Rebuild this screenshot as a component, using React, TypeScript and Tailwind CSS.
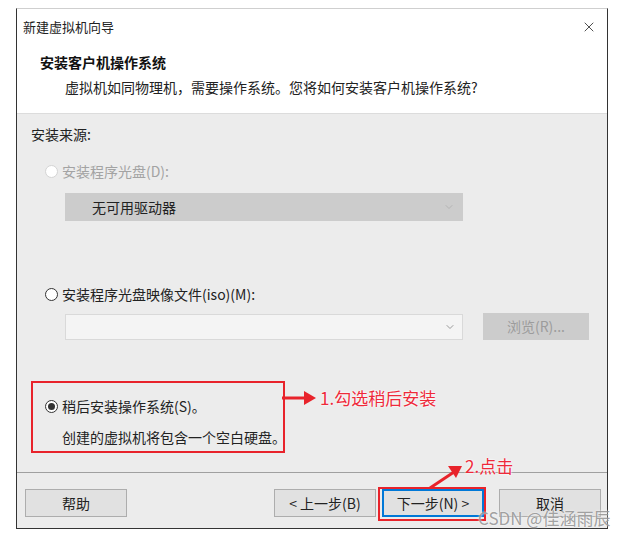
import { X, ChevronDown } from "lucide-react"

const font = "font-['Microsoft_YaHei','Noto_Sans_CJK_SC',sans-serif]"

function Radio({ checked, disabled }: { checked?: boolean; disabled?: boolean }) {
  return (
    <span
      className={
        "flex h-[13px] w-[13px] shrink-0 items-center justify-center rounded-full border bg-white " +
        (disabled ? "border-[#d4d4d4]" : "border-[#333]")
      }
    >
      {checked && <span className="h-[7px] w-[7px] rounded-full bg-[#333]" />}
    </span>
  )
}

function Btn({ label, focused }: { label: string; focused?: boolean }) {
  return (
    <div
      className={
        "flex h-[28px] w-[102px] items-center justify-center bg-[#e1e1e1] text-[14px] text-[#222] " +
        (focused ? "border-2 border-[#0078d7]" : "border border-[#adadad]")
      }
    >
      {label}
    </div>
  )
}

export default function App() {
  return (
    <div className={"relative h-[535px] w-[629px] overflow-hidden bg-white pl-[16px] pt-[8px] " + font}>
      <div className="flex h-[521px] w-[592px] flex-col border border-[#333] border-t-[#cfcfcf]">
        {/* title bar */}
        <div className="flex h-[36px] items-center justify-between bg-white pl-[6px] pr-[10px] text-[13px] text-[#222]">
          <span>新建虚拟机向导</span>
          <X className="h-[16px] w-[16px] text-[#333]" strokeWidth={1.3} />
        </div>

        {/* header */}
        <div className="flex h-[68px] flex-col bg-white pl-[23px] pt-[8px] text-[14px] text-[#111]">
          <span className="h-[18px] leading-[18px] font-bold">安装客户机操作系统</span>
          <span className="mt-[7px] pl-[25px] leading-[18px] text-[#222]">
            虚拟机如同物理机，需要操作系统。您将如何安装客户机操作系统?
          </span>
        </div>

        {/* content */}
        <div className="flex h-[359px] flex-col border-t border-[#dcdcdc] bg-[#ececec] pl-[14px] text-[14px]">
          <span className="mt-[10px] h-[20px] leading-[20px] text-[#222]">安装来源:</span>

          <div className="ml-[14px] mt-[17px] flex h-[20px] items-center gap-[4px] text-[#a3a3a3]">
            <Radio disabled />
            <span>安装程序光盘(D):</span>
          </div>

          <div className="ml-[34px] mt-[12px] flex h-[28px] w-[398px] items-center justify-between bg-[#cccccc] pl-[27px] pr-[8px]">
            <span className="text-[#222]">无可用驱动器</span>
            <ChevronDown className="h-[12px] w-[12px] text-[#b5b5b5]" />
          </div>

          <div className="ml-[14px] mt-[63px] flex h-[20px] items-center gap-[4px] text-[#222]">
            <Radio />
            <span>安装程序光盘映像文件(iso)(M):</span>
          </div>

          <div className="ml-[34px] mt-[9px] flex items-center gap-[20px]">
            <div className="flex h-[26px] w-[398px] items-center justify-end border border-[#d9d9d9] bg-[#f4f4f4] pr-[6px]">
              <ChevronDown className="h-[12px] w-[12px] text-[#999]" />
            </div>
            <div className="flex h-[27px] w-[106px] items-center justify-center bg-[#cccccc] text-[#9c9c9c]">
              浏览(R)...
            </div>
          </div>

          <div className="mt-[41px] flex h-[72px] w-[254px] flex-col border-2 border-[#e8232b] pl-[12px] pt-[13px]">
            <div className="flex h-[20px] items-center gap-[4px] text-[#222]">
              <Radio checked />
              <span>稍后安装操作系统(S)。</span>
            </div>
            <span className="mt-[11px] h-[20px] whitespace-nowrap pl-[17px] leading-[20px] text-[#222]">
              创建的虚拟机将包含一个空白硬盘。
            </span>
          </div>
        </div>

        {/* footer */}
        <div className="flex flex-1 items-start justify-between border-t border-[#a0a0a0] bg-[#ececec] pl-[8px] pr-[6px] pt-[16px]">
          <Btn label="帮助" />
          <div className="flex gap-[6px]">
            <Btn label="< 上一步(B)" />
            <Btn label="下一步(N) >" focused />
            <div className="ml-[9px]">
              <Btn label="取消" />
            </div>
          </div>
        </div>
      </div>

      {/* annotations */}
      <svg className="absolute left-[282px] top-[388px]" width="36" height="20" viewBox="0 0 36 20">
        <line x1="0" y1="10" x2="24" y2="10" stroke="#e8232b" strokeWidth="3" />
        <polygon points="22,3 34,10 22,17" fill="#e8232b" />
      </svg>
      <span className="absolute left-[320px] top-[385px] text-[17px] text-[#ee2a3a] [text-shadow:0_0_2px_#fff,0_0_2px_#fff]">
        1.勾选稍后安装
      </span>

      <div className="absolute left-[378px] top-[487px] h-[34px] w-[108px] border-2 border-[#e8232b]" />
      <svg className="absolute left-[428px] top-[464px]" width="36" height="26" viewBox="0 0 36 26">
        <line x1="2" y1="24" x2="26" y2="8" stroke="#e8232b" strokeWidth="3" />
        <polygon points="20,2 34,2 28,14" fill="#e8232b" />
      </svg>
      <span className="absolute left-[465px] top-[453px] text-[17px] text-[#ee2a3a] [text-shadow:0_0_2px_#fff,0_0_2px_#fff]">
        2.点击
      </span>

      <span className="absolute left-[478px] top-[505px] text-[17px] text-[#8a8a8acc] [text-shadow:0_0_2px_#fff]">
        CSDN @佳涵雨辰
      </span>
    </div>
  )
}
